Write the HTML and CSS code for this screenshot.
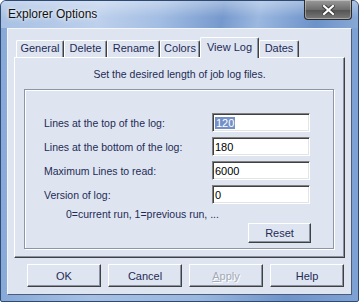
FILE: index.html
```html
<!DOCTYPE html>
<html lang="en">
<head>
  <meta charset="UTF-8">
  <title>Explorer Options</title>
  <link rel="stylesheet" href="styles.css">
</head>
<body>

  <div class="window">
    <div class="titlebar">
      <span class="title">Explorer Options</span>
      <button class="close-btn">
        <svg width="13" height="10" viewBox="0 0 13 10">
          <path d="M2 1 L11 9 M11 1 L2 9" stroke="#3a3a3a" stroke-width="4" stroke-linecap="square"/>
          <path d="M2 1 L11 9 M11 1 L2 9" stroke="#ffffff" stroke-width="2.2" stroke-linecap="square"/>
        </svg>
      </button>
    </div>

    <div class="client">
      <div class="tabs">
        <div class="tab tab-general">General</div>
        <div class="tab tab-delete">Delete</div>
        <div class="tab tab-rename">Rename</div>
        <div class="tab tab-colors">Colors</div>
        <div class="tab tab-viewlog active">View Log</div>
        <div class="tab tab-dates">Dates</div>
      </div>

      <div class="tab-page">
        <p class="desc">Set the desired length of job log files.</p>

        <div class="groupbox">
          <div class="field">
            <span class="label">Lines at the top of the log:</span>
            <div class="edit"><span class="sel">120</span></div>
          </div>
          <div class="field">
            <span class="label">Lines at the bottom of the log:</span>
            <div class="edit">180</div>
          </div>
          <div class="field">
            <span class="label">Maximum Lines to read:</span>
            <div class="edit">6000</div>
          </div>
          <div class="field">
            <span class="label">Version of log:</span>
            <div class="edit">0</div>
          </div>
          <div class="note">0=current run, 1=previous run, ...</div>
          <button class="btn reset-btn">Reset</button>
        </div>
      </div>

      <div class="buttons">
        <button class="btn">OK</button>
        <button class="btn">Cancel</button>
        <button class="btn disabled"><u>A</u>pply</button>
        <button class="btn">Help</button>
      </div>
    </div>
  </div>

</body>
</html>
```

FILE: styles.css
```css
body {
  margin: 0;
  padding: 0;
  background-color: #ffffff;
  font-family: "Liberation Sans", Arial, sans-serif;
  font-size: 10.5px;
  color: #1e2b57;
}

.window {
  width: 359px;
  height: 302px;
  box-sizing: border-box;
  border: 1px solid #2f4a72;
  border-radius: 6px 6px 2px 2px;
  padding: 0 6px 6px 6px;
  background: linear-gradient(to right, #86a9d8, #a6c0e4 25%, #9ab7df 55%, #6f94ca 80%, #7fa2d4);
  display: flex;
  flex-direction: column;
}

.titlebar {
  height: 27px;
  margin: 0 -6px;
  padding-left: 7px;
  display: flex;
  align-items: flex-start;
  border-radius: 5px 5px 0 0;
  background:
    linear-gradient(to bottom, rgba(255, 255, 255, 0.35), rgba(255, 255, 255, 0) 60%),
    linear-gradient(100deg, #a7c0e3 0%, #bdd0ec 28%, #a2bde3 45%, #7699cd 62%, #9bb8e0 72%, #6c92c9 88%, #88a9d6 100%);
}

.title {
  font-size: 12px;
  line-height: 27px;
  color: #111111;
  text-shadow: 0 0 6px rgba(255, 255, 255, 0.9), 0 0 3px rgba(255, 255, 255, 0.9);
}

.close-btn {
  margin-left: auto;
  margin-right: 6px;
  margin-top: -1px;
  width: 48px;
  height: 20px;
  padding: 0;
  border: 1px solid #2b2b2b;
  border-top: none;
  border-radius: 0 0 4px 4px;
  background: linear-gradient(to bottom, #9a9a9a, #6e6e6e 50%, #555555 55%, #7a7a7a);
  box-shadow: inset 0 0 0 1px rgba(255, 255, 255, 0.35);
  display: flex;
  align-items: center;
  justify-content: center;
}

.client {
  flex: 1;
  display: flex;
  flex-direction: column;
  padding: 8px 6px 7px 6px;
  background-color: #dfe5f0;
  border: 1px solid;
  border-color: #f2f5fa #4b5d78 #4b5d78 #f2f5fa;
}

/* tabs */
.tabs {
  display: flex;
  align-items: flex-end;
  height: 20px;
  margin-left: 2px;
  font-size: 11px;
}

.tab {
  box-sizing: border-box;
  height: 17px;
  line-height: 15px;
  text-align: center;
  background-color: #dfe5f0;
  border-top: 1px solid #ffffff;
  border-left: 1px solid #ffffff;
  border-right: 1px solid #404040;
  box-shadow: inset -1px 0 0 #8a93a4;
  border-radius: 2px 2px 0 0;
}

.tab-general { width: 48px; }
.tab-delete { width: 43px; }
.tab-rename { width: 53px; }
.tab-colors { width: 40px; }
.tab-viewlog { width: 59px; }
.tab-dates { width: 40px; }

.tab.active {
  height: 21px;
  line-height: 18px;
  margin-bottom: -1px;
  position: relative;
  z-index: 2;
}

.tab-page {
  box-sizing: border-box;
  height: 201px;
  border: 1px solid;
  border-color: #ffffff #404040 #404040 #ffffff;
  box-shadow: inset -1px -1px 0 #8a93a4;
  background-color: #dfe5f0;
}

.desc {
  margin: 9px 0 0 0;
  line-height: 14px;
  text-align: center;
}

/* group box */
.groupbox {
  box-sizing: border-box;
  width: 310px;
  height: 160px;
  margin: 8px 0 0 9px;
  padding: 23px 0 0 19px;
  border: 1px solid #8d96a8;
  box-shadow: inset 1px 1px 0 #ffffff, 1px 1px 0 #ffffff;
  display: flex;
  flex-direction: column;
  gap: 5px;
}

.field {
  display: flex;
  align-items: center;
  height: 19px;
}

.label {
  width: 168px;
  flex-shrink: 0;
}

.edit {
  box-sizing: border-box;
  width: 98px;
  height: 19px;
  padding: 2px 0 0 2px;
  line-height: 14px;
  font-size: 11px;
  color: #000000;
  background-color: #ffffff;
  border: 1px solid;
  border-color: #808080 #ffffff #ffffff #808080;
  box-shadow: inset 1px 1px 0 #404040, inset -1px -1px 0 #e4e4e4;
}

.sel {
  background-color: #7391c8;
  color: #ffffff;
  padding: 0 1px;
}

.note {
  margin: -1px 0 0 22px;
  line-height: 12px;
}

.btn {
  box-sizing: border-box;
  width: 74px;
  height: 23px;
  padding: 0;
  font-family: "Liberation Sans", Arial, sans-serif;
  font-size: 11px;
  color: #1e2b57;
  background-color: #dfe5f0;
  border: 1px solid;
  border-color: #ffffff #404040 #404040 #ffffff;
  box-shadow: inset -1px -1px 0 #8a93a4;
}

.reset-btn {
  width: 63px;
  height: 20px;
  margin: -2px 0 0 204px;
}

.btn.disabled {
  color: #a3aab8;
  text-shadow: 1px 1px 0 #ffffff;
}

.buttons {
  display: flex;
  gap: 7px;
  margin-top: 6px;
  padding-left: 13px;
}
```
